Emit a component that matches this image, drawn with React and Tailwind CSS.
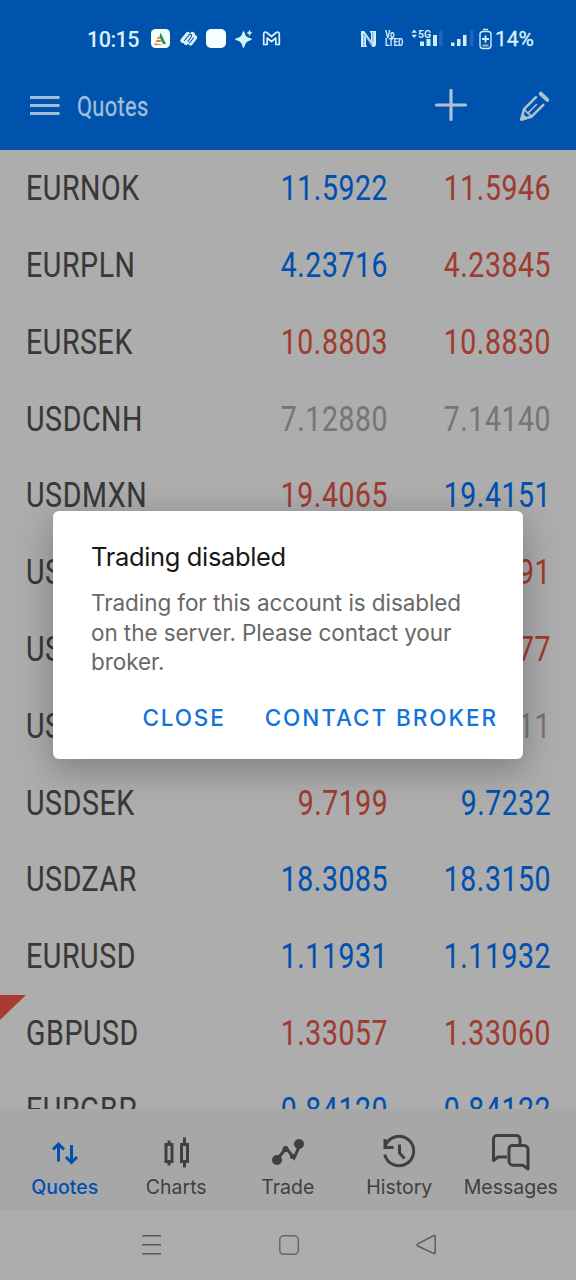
const BLUE = 'text-[#0050ad]';
const RED = 'text-[#9e3c30]';
const GRAY = 'text-[#767676]';

const QUOTES = [
  ['EURNOK', '11.5922', BLUE, '11.5946', RED],
  ['EURPLN', '4.23716', BLUE, '4.23845', RED],
  ['EURSEK', '10.8803', RED, '10.8830', RED],
  ['USDCNH', '7.12880', GRAY, '7.14140', GRAY],
  ['USDMXN', '19.4065', RED, '19.4151', BLUE],
  ['USDNOK', '10.3562', RED, '10.3591', RED],
  ['USDPLN', '3.78542', RED, '3.78677', RED],
  ['USDRUB', '92.4105', GRAY, '92.4211', GRAY],
  ['USDSEK', '9.7199', RED, '9.7232', BLUE],
  ['USDZAR', '18.3085', BLUE, '18.3150', BLUE],
  ['EURUSD', '1.11931', BLUE, '1.11932', BLUE],
  ['GBPUSD', '1.33057', RED, '1.33060', RED, true],
  ['EURGBP', '0.84120', BLUE, '0.84122', BLUE],
];

function StatusBar() {
  return (
    <div className="flex h-[76px] items-center pl-[87px] pt-[2px] text-[#d9f2f8]">
      <span className="w-[52px] shrink-0 whitespace-nowrap pt-px text-[21.500px] font-medium leading-none tracking-[-0.500px]">10:15</span>
      <svg className="ml-[9px] w-[138px] shrink-0" width="138" height="24" viewBox="148 27 138 24" fill="none">
        <rect x="151" y="29" width="19" height="19" rx="4.500" fill="#f4fdfb" />
        <path d="M160.500 32.500 166 44h-3l-3.500-7z" fill="#2d8a59" />
        <path d="m158.500 36-1.500 3h3zM156.500 40l-1 2h6l-1-2zM154.800 43.200 154 45h9" fill="#d87945" />
        <path d="m182.800 40.500 5-6M186 42.500l6.500-8M190.500 43l4.300-5.500" stroke="#d9f2f8" strokeWidth="5" strokeLinecap="round" />
        <path d="m184.500 40.500 4-5c1.500-2 4-.8 2.800 1l-3.300 5M189.500 43l4-5" stroke="#0053ad" strokeWidth="1.100" strokeLinecap="round" />
        <rect x="206" y="29" width="20" height="19" rx="5" fill="#f7ffff" />
        <path d="M243.500 32c1.200 4.800 3 6 7.500 7.200-4.500 1.200-6.300 2.700-7.500 7.800-1.200-5.100-3-6.600-7.500-7.800 4.500-1.200 6.300-2.400 7.500-7.200z" fill="#d9f2f8" stroke="#d9f2f8" strokeWidth="1.500" strokeLinejoin="round" />
        <path d="M249.500 30c.4 2 .9 2.500 2.500 2.900-1.600.4-2.100.9-2.500 2.900-.4-2-.9-2.500-2.500-2.900 1.600-.4 2.100-.9 2.500-2.900z" fill="#d9f2f8" stroke="#d9f2f8" strokeWidth="0.500" />
        <path d="M263.700 44.500V34.100c0-2 1.700-2.600 3-1.600l4.800 4 4.800-4c1.300-1 3-.4 3 1.600v10.400h-3.500V38l-4.300 3.500-4.300-3.500v6.500z" stroke="#d9f2f8" strokeWidth="1.700" strokeLinejoin="round" />
      </svg>
      <svg className="ml-[74px] shrink-0" width="17" height="18" viewBox="0 0 17 18">
        <path d="M1 1h3.200l6.800 9.500V3.500L9.500 1H16v13c0 2-1 3-2.500 3h-1L6 7.500V15l1.200 2H1z" fill="#cdefff" />
        <path d="M3.800 16.500V4l8.700 11M12.800 2v10" fill="none" stroke="#0053ad" strokeWidth="0.500" />
      </svg>
      <span className="ml-[8px] flex w-[26px] shrink-0">
        <span className="flex origin-left scale-x-[0.800] flex-col text-[10px] font-bold leading-[8.500px]">
          <span>Vo</span>
          <span>LTED</span>
        </span>
      </span>
      <svg className="ml-0 shrink-0" width="64" height="24" viewBox="412 27 64 24" fill="none">
        <path d="m412.500 32.700 2.700-3.300 2.700 3.300zM412.500 34.700l2.700 3.300 2.700-3.300z" fill="#cdefff" />
        <text x="419" y="38" fill="#d9f2f8" fontSize="11" fontWeight="600" textLength="13" lengthAdjust="spacingAndGlyphs">5G</text>
        <path d="M421 41.500h4V46h-4zM427.500 39h4v7h-4zM434 35h4v11h-4zM452 42.500h3.500V46H452zM458 39h3.500v7H458zM464 35h3.500v11H464z" fill="#cdefff" />
        <path d="M440 30.500h3.500V46H440zM471 30.500h3.500V46H471z" fill="#2065b8" />
      </svg>
      <svg className="ml-[4px] shrink-0" width="13" height="22" viewBox="0 0 13 22" fill="none" stroke="#cdefff" strokeWidth="1.400">
        <rect x="1" y="3.500" width="11" height="17" rx="3" />
        <path d="M4 1.500h5" />
        <path d="M6.500 7.500v7M3 11h7" strokeWidth="1.800" />
        <path d="M3.500 17.500h6" stroke="#b8b3a0" strokeWidth="2" />
      </svg>
      <span className="ml-[3px] whitespace-nowrap pt-px text-[21px] leading-none [-webkit-text-stroke:0.3px]">14%</span>
    </div>
  );
}

function Toolbar() {
  return (
    <div className="flex h-[74px] items-center pb-[14px] pl-[30px] text-[#a4bfdc]">
      <svg width="30" height="22" viewBox="0 0 30 22" stroke="#a4bfdc" strokeWidth="3">
        <path d="M0 2.500h29.500M0 10.500h29.500M0 18.500h29.500" />
      </svg>
      <span className="ml-[17px] w-[342px] pt-[4px]">
        <span className="inline-block origin-left scale-x-[0.81] text-[27px] leading-none tracking-[0.400px] [-webkit-text-stroke:0.3px]">Quotes</span>
      </span>
      <svg className="ml-[15px] shrink-0" width="34" height="34" viewBox="0 0 34 34" fill="none" stroke="#afc1d4" strokeWidth="3.200" strokeLinecap="round">
        <path d="M17 1.500v29M2.500 16h29" />
      </svg>
      <svg className="ml-[50px] shrink-0" width="34" height="34" viewBox="518 88 34 34" fill="none" stroke="#afc1d4" strokeWidth="2.500" strokeLinejoin="round" strokeLinecap="round">
        <path d="M536 96.200 524 108.200 521.300 118.500 531.500 115.700 543.300 103.900" />
        <path d="m524.500 108.500 3 3.500 4 3M528.500 111.500l8-8" strokeWidth="1.600" />
        <path d="m521.300 118.500 1.300-4.500 3.200 3.200z" fill="#afc1d4" />
        <path d="m540.800 92.700 6.500 6.200" strokeWidth="4" />
      </svg>
    </div>
  );
}

function QuoteRow({ row }) {
  const [symbol, bid, bidColor, ask, askColor, flagged] = row;
  return (
    <div className="relative flex h-[76.800px] shrink-0 items-center pl-[26px] pr-[25px] pt-px text-[35.500px] leading-none [-webkit-text-stroke:0.12px]">
      {flagged && (
        <svg className="absolute left-0 top-0" width="26" height="26" viewBox="0 0 26 26">
          <path d="M0 0h26L0 25z" fill="#a93c30" />
        </svg>
      )}
      <span className="w-[160px]">
        <span className="inline-block origin-left scale-x-[0.805] tracking-[0.700px] text-[#383838]">{symbol}</span>
      </span>
      <span className="flex w-[202px] justify-end">
        <span className={`inline-block origin-right scale-x-[0.8] tracking-[0.700px] ${bidColor}`}>{bid}</span>
      </span>
      <span className="flex w-[163px] justify-end">
        <span className={`inline-block origin-right scale-x-[0.8] tracking-[0.700px] ${askColor}`}>{ask}</span>
      </span>
    </div>
  );
}

function Tab({ label, active, children }) {
  return (
    <div className={`flex w-[111.500px] shrink-0 flex-col items-center ${active ? 'font-medium text-[#0050ad]' : 'text-[#404040]'}`}>
      <svg width="44" height="40" viewBox="0 0 44 40" fill="none" stroke="currentColor">{children}</svg>
      <span className="mt-[2px] whitespace-nowrap font-[Inter,sans-serif] text-[19.500px] leading-[24px]">{label}</span>
    </div>
  );
}

function TabBar() {
  return (
    <nav className="flex h-[101px] shrink-0 bg-[#a7a7a7] pl-[9px] pt-[24px]">
      <Tab label="Quotes" active>
        <path d="M15.500 28.500V11M10 16.500l5.500-5.500 5.500 5.500M28.500 12v17.500M23 24l5.500 5.500L34 24" strokeWidth="3" />
      </Tab>
      <Tab label="Charts">
        <path d="M12 11.500h6v17h-6zM27.500 11.500h6v17h-6z" strokeWidth="3" />
        <path d="M15 7.500v4M15 28.500v4M30.500 4.500v7M30.500 28.500v6" strokeWidth="3" />
      </Tab>
      <Tab label="Trade">
        <path d="m11 27 9-12 8 10 6-13" strokeWidth="3" />
        <g fill="currentColor" stroke="none">
          <circle cx="11" cy="27" r="5" />
          <circle cx="19.500" cy="16" r="3" />
          <circle cx="26.500" cy="23.500" r="2.500" />
          <circle cx="33" cy="11" r="5" />
        </g>
      </Tab>
      <Tab label="History">
        <path d="M8.500 12.200A14.700 14.700 0 1 1 7.700 21.500M8 6v8.500h8.500" strokeWidth="3" />
        <path d="M22.500 11.500v8.500l5 5.500" strokeWidth="3" />
      </Tab>
      <Tab label="Messages">
        <path d="M18 24H9l-4.500 3.500V6A3.500 3.500 0 0 1 8 2.500h19.500A3.500 3.500 0 0 1 31 6v6" strokeWidth="3" strokeLinejoin="round" />
        <path d="M23 12.500h12a4 4 0 0 1 4 4V36l-5-3.800H24a4 4 0 0 1-4-4V16a3.500 3.500 0 0 1 3-3.500z" strokeWidth="3" strokeLinejoin="round" />
      </Tab>
    </nav>
  );
}

function SystemNav() {
  return (
    <div className="flex h-[70px] shrink-0 items-center pl-[141px]">
      <svg width="20" height="22" viewBox="0 0 20 22" stroke="#5a5a5a" strokeWidth="1.500">
        <path d="M1 1.800h19M1 10.800h19M1 19.800h19" />
      </svg>
      <svg className="ml-[117px]" width="22" height="22" viewBox="0 0 22 22" fill="none" stroke="#666" strokeWidth="1.500">
        <rect x="1.800" y="1.800" width="18.500" height="18.500" rx="4" />
      </svg>
      <svg className="ml-[116px]" width="22" height="22" viewBox="0 0 22 22" fill="none" stroke="#5d5d5d" strokeWidth="1.500">
        <path d="M1.800 9.800 17.500 1.800q1.700-.7 1.700 1v15.600q0 1.700-1.700 1L1.800 12q-1.500-1.100 0-2.200z" />
      </svg>
    </div>
  );
}

function Dialog() {
  return (
    <div role="dialog" className="absolute left-[53px] top-[511px] h-[248px] w-[470px] rounded-[6px] bg-white pl-[38px] pr-[27px] pt-[30px] font-[Inter,sans-serif] shadow-[0_10px_34px_2px_rgba(0,0,0,0.26)]">
      <h2 className="whitespace-nowrap text-[25.500px] leading-[32px] tracking-[-0.350px] text-[#181818]">Trading disabled</h2>
      <p className="mt-[15px] whitespace-nowrap text-[22.500px] leading-[29.500px] tracking-[-0.080px] text-[#686868]">
        Trading for this account is disabled
        <br />
        on the server. Please contact your
        <br />
        broker.
      </p>
      <div className="mt-[27px] flex justify-end gap-[40px] whitespace-nowrap text-[22.500px] font-medium leading-[28px] text-[#1273da]">
        <button className="-mr-[1px] tracking-[1.850px]">CLOSE</button>
        <button className="-mr-[2px] tracking-[1.950px]">CONTACT BROKER</button>
      </div>
    </div>
  );
}

export default function App() {
  return (
    <div className="relative flex h-[1280px] w-[576px] flex-col overflow-hidden bg-[#adadad] font-[Roboto,sans-serif]">
      <header className="h-[150px] shrink-0 bg-[#0053ad]">
        <StatusBar />
        <Toolbar />
      </header>
      <main className="flex h-[959px] shrink-0 flex-col overflow-hidden">
        {QUOTES.map((row) => (
          <QuoteRow key={row[0]} row={row} />
        ))}
      </main>
      <TabBar />
      <SystemNav />
      <Dialog />
    </div>
  );
}
